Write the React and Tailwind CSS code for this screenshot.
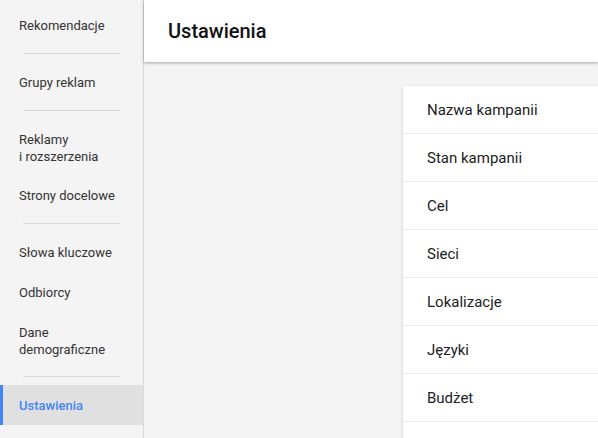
const navGroups = [
  [{ label: 'Rekomendacje' }],
  [{ label: 'Grupy reklam' }],
  [{ label: ['Reklamy', 'i rozszerzenia'] }, { label: 'Strony docelowe' }],
  [{ label: 'Słowa kluczowe' }, { label: 'Odbiorcy' }, { label: ['Dane', 'demograficzne'] }],
  [{ label: 'Ustawienia', active: true }],
];

const settings = ['Nazwa kampanii', 'Stan kampanii', 'Cel', 'Sieci', 'Lokalizacje', 'Języki', 'Budżet', ''];

function NavItem({ item }) {
  const lines = Array.isArray(item.label) ? item.label : [item.label];
  return (
    <div
      className={
        item.active
          ? 'relative bg-[#e0e0e0] px-[19px] pt-[12px] pb-[10px] text-[13px] leading-[18px] font-medium text-[#4285f4]'
          : lines.length > 1
            ? 'px-[19px] pt-[12px] pb-[10px] text-[13px] leading-[17px] text-[#333333]'
            : 'px-[19px] pt-[12px] pb-[10px] text-[13px] leading-[18px] text-[#333333]'
      }
    >
      {item.active && <span className="absolute left-0 top-0 h-full w-[3px] bg-[#4285f4]" />}
      {lines.map((l) => (
        <div key={l}>{l}</div>
      ))}
    </div>
  );
}

export default function App() {
  return (
    <div
      className="flex h-[438px] w-[598px] overflow-hidden bg-[#f4f4f4]"
      style={{ fontFamily: 'Roboto, "Liberation Sans", sans-serif' }}
    >
      <aside className="w-[144px] shrink-0 border-r border-[#dadada] bg-[#f4f4f4] pt-[5px]">
        {navGroups.map((group, i) => (
          <div key={i}>
            {i > 0 && <div className="mx-[23px] my-[8px] h-px bg-[#dadada]" />}
            {group.map((item, j) => (
              <NavItem key={j} item={item} />
            ))}
          </div>
        ))}
      </aside>

      <div className="flex min-w-0 flex-1 flex-col">
        <header className="relative z-10 flex h-[62px] shrink-0 items-center bg-white px-6 shadow-[0_1px_3px_rgba(0,0,0,0.35)]">
          <h1 className="text-[20px] font-medium text-[#111111]">Ustawienia</h1>
        </header>

        <main className="flex-1 pl-[259px] pt-[24px]">
          <div className="w-[400px] bg-white shadow-[0_1px_3px_rgba(0,0,0,0.18)]">
            {settings.map((s, i) => (
              <div
                key={i}
                className="flex h-12 items-center border-b border-[#ebebeb] px-6 pt-[2px] text-[15px] text-[#202124]"
              >
                {s}
              </div>
            ))}
          </div>
        </main>
      </div>
    </div>
  );
}
